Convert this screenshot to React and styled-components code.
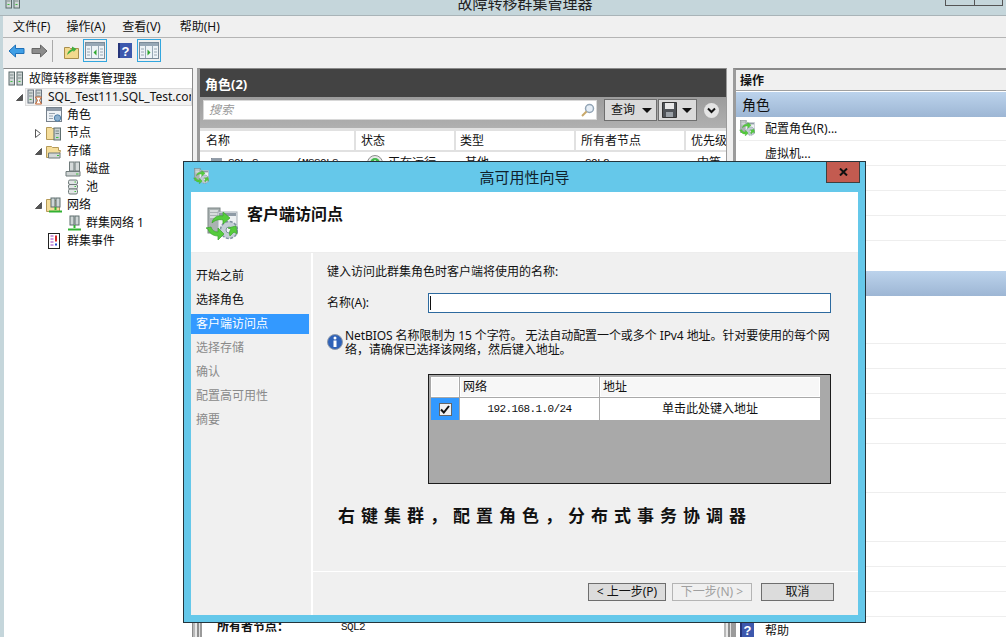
import React from "react";
import styled, { createGlobalStyle } from "styled-components";

const Global = createGlobalStyle`
  html, body { margin: 0; padding: 0; height: 100%; overflow: hidden; background: #f0f0f0; }
  #root { height: 100%; }
  * { box-sizing: border-box; }
`;

const sans = `"Noto Sans", "Noto Sans CJK SC", sans-serif`;
const mono = `"Liberation Mono", "Noto Sans CJK SC", monospace`;

const Page = styled.div`
  position: relative;
  width: 1006px;
  height: 637px;
  overflow: hidden;
  display: flex;
  flex-direction: column;
  font: 12px/16px ${sans};
  color: #111;
  background: #f0f0f0;
`;
const TitleBar = styled.div`
  height: 16px;
  flex: none;
  position: relative;
  background: #c5d6db;
  border-bottom: 1px solid #a9b4b8;
  overflow: hidden;
  display: flex;
  justify-content: center;
  padding-left: 44px;
`;
const AppTitle = styled.div`
  font-size: 15px;
  line-height: 20px;
  margin-top: -7px;
  color: #222;
`;
const AppIcon = styled.div`
  position: absolute;
  left: 5px;
  top: -6px;
`;
const WinButtons = styled.div`
  position: absolute;
  right: 3px;
  top: -1px;
  display: flex;
  height: 7px;
  border: 1px solid #555;
`;
const WinButton = styled.div`
  width: 28px;
  border-left: ${(p) => (p.$first ? "none" : "1px solid #555")};
`;
const Chrome = styled.div`
  flex: 1;
  min-height: 0;
  display: flex;
  flex-direction: column;
  border-left: 3px solid #c5d6db;
`;
const MenuBar = styled.div`
  height: 22px;
  flex: none;
  display: flex;
  gap: 16px;
  align-items: center;
  padding-left: 10px;
  border-bottom: 1px solid #b4b4b4;
`;
const MenuItem = styled.span`
  line-height: 16px;
  margin-right: ${(p) => p.$mr || 0}px;
`;
const Toolbar = styled.div`
  height: 30px;
  flex: none;
  display: flex;
  align-items: center;
  padding: 0 0 5px 5px;
`;
const ToolIcon = styled.div`
  display: flex;
  margin-left: ${(p) => p.$ml || 0}px;
`;
const ToolSep = styled.div`
  width: 1px;
  height: 22px;
  background: #aaa;
  margin: 0 11px 0 4px;
`;
const ToolToggle = styled.div`
  width: 24px;
  height: 23px;
  border: 1px solid #32a6de;
  margin-left: ${(p) => p.$ml || 0}px;
  display: flex;
  align-items: center;
  justify-content: center;
`;
const Panes = styled.div`
  flex: 1;
  min-height: 0;
  display: flex;
`;
const TreePane = styled.div`
  width: 190px;
  flex: none;
  background: #fff;
  border: 1px solid #8a8a8a;
  border-left-color: #c5d6db;
  border-bottom: none;
  padding-top: 1px;
`;
const TreeRow = styled.div`
  height: 18px;
  display: flex;
  align-items: center;
  padding-left: ${(p) => (p.$level === 0 ? 4 : p.$level * 19 - 8)}px;
`;
const ArrowSlot = styled.span`
  width: 12px;
  flex: none;
  display: flex;
  padding-left: 1px;
`;
const TreeLabel = styled.div`
  flex: 1;
  min-width: 0;
  height: 18px;
  display: flex;
  align-items: center;
  gap: 5px;
  margin-left: -2px;
  padding-left: 1px;
  overflow: hidden;
  white-space: nowrap;
  border: 1px solid ${(p) => (p.$selected ? "#dcdcdc" : "transparent")};
  background: ${(p) => (p.$selected ? "#f2f2f2" : "transparent")};
  svg { flex: none; }
`;
const CenterColumn = styled.div`
  width: 540px;
  flex: none;
  display: flex;
  flex-direction: column;
`;
const CenterPane = styled.div`
  flex: 1;
  min-height: 0;
  margin: 0 6px 0 4px;
  background: #fff;
  border-top: 1px solid #8a8a8a;
  border-left: 3px solid #9b9b9b;
  border-right: 1px solid #9b9b9b;
`;
const DarkHeader = styled.div`
  height: 28px;
  background: #434343;
  color: #fff;
  font-weight: 700;
  font-size: 13px;
  line-height: 30px;
  padding-left: 5px;
`;
const SearchBar = styled.div`
  height: 31px;
  display: flex;
  align-items: flex-start;
  padding: 2px 0 0 3px;
  background: linear-gradient(#9c9c9c, #b0b0b0);
`;
const SearchBox = styled.div`
  width: 394px;
  height: 20px;
  margin: 1px 7px 0 0;
  background: #fff;
  border: 1px solid #d8d8d8;
  display: flex;
  align-items: center;
  justify-content: space-between;
  padding: 0 1px 0 5px;
  color: #999;
  font-style: italic;
`;
const DropButton = styled.div`
  width: ${(p) => p.$w}px;
  height: 22px;
  background: #dadada;
  border: 1px solid #6e6e6e;
  margin-right: ${(p) => p.$mr || 0}px;
  display: flex;
  align-items: center;
  justify-content: space-between;
  padding: 0 4px 0 ${(p) => p.$pl || 6}px;
`;
const Caret = styled.span`
  width: 0;
  height: 0;
  border-left: 5px solid transparent;
  border-right: 5px solid transparent;
  border-top: 5px solid #111;
`;
const RoundButton = styled.div`
  width: 15px;
  height: 15px;
  margin-top: 4px;
  border-radius: 50%;
  background: #e4e4e4;
  display: flex;
  align-items: center;
  justify-content: center;
`;
const ListHead = styled.div`
  display: grid;
  grid-template-columns: 154px 98px 118px 108px 40px;
  column-gap: 2px;
  background: #e1e1e1;
  padding: 3px 0 2px;
`;
const HeadCell = styled.div`
  background: #fff;
  height: 19px;
  line-height: 19px;
  padding-left: ${(p) => p.$pl || 5}px;
  overflow: hidden;
  white-space: nowrap;
`;
const ListRow = styled.div`
  display: grid;
  grid-template-columns: 156px 100px 120px 110px 40px;
  height: 20px;
  align-items: center;
  margin-top: 1px;
`;
const RowCell = styled.div`
  display: flex;
  align-items: center;
  gap: ${(p) => p.$gap || 0}px;
  padding-left: ${(p) => p.$pl || 0}px;
  white-space: nowrap;
  overflow: hidden;
`;
const MonoText = styled.span`
  font: 11px/14px ${mono};
  letter-spacing: -0.6px;
  margin-left: ${(p) => p.$ml || 0}px;
`;
const DetailRow = styled.div`
  height: 20px;
  flex: none;
  display: flex;
  background: #fff;
  align-items: center;
`;
const Stripe = styled.div`
  width: 9px;
  height: 100%;
  flex: none;
  background: linear-gradient(90deg, #b8b8b8 0 2px, #e8e8e8 2px 4px, #8f8f8f 4px 6px, #e0e0e0 6px 7px, #9a9a9a 7px);
`;
const DetailLabel = styled.div`
  flex: 1;
  display: flex;
  padding-left: 15px;
  font-weight: 700;
  line-height: 20px;
`;
const DetailKey = styled.span`
  width: 124px;
`;
const DetailValue = styled.span`
  font: 400 11px/20px ${mono};
  letter-spacing: -0.6px;
`;
const ActionPane = styled.div`
  flex: 1;
  min-width: 0;
  background: #fff;
  border-top: 2px solid #8a8a8a;
  border-left: 3px solid #9b9b9b;
  position: relative;
`;
const ActionTitle = styled.div`
  height: 21px;
  background: #f0f0f0;
  border-bottom: 1px solid #a0a0a0;
  line-height: 22px;
  padding-left: 4px;
  font-weight: 700;
`;
const ActionSection = styled.div`
  height: 25px;
  margin-top: ${(p) => p.$mt || 0}px;
  background: linear-gradient(#bcd3ec, #9db6d4);
  line-height: 25px;
  padding-left: 6px;
  font-size: 14px;
`;
const ActionRow = styled.div`
  height: ${(p) => p.$h || 25}px;
  margin-left: 3px;
  border-bottom: ${(p) => (p.$plain ? "none" : "1px solid #eeeeee")};
  display: flex;
  align-items: center;
  position: relative;
  padding-left: 26px;
  padding-top: 1px;
`;
const ActionIcon = styled.span`
  position: absolute;
  left: ${(p) => p.$left || 0}px;
  top: ${(p) => p.$top || 3}px;
  display: flex;
`;
const Dialog = styled.div`
  position: absolute;
  left: 183px;
  top: 161px;
  width: 683px;
  height: 462px;
  border: 1px solid #24343c;
  background: #65c8ea;
  display: flex;
  flex-direction: column;
  padding: 0 7px 7px;
`;
const DialogBar = styled.div`
  height: 30px;
  flex: none;
  position: relative;
  display: flex;
  align-items: center;
  justify-content: center;
  font-size: 15px;
  color: #10222c;
`;
const DialogIcon = styled.span`
  position: absolute;
  left: 2px;
  top: 6px;
  display: flex;
`;
const CloseButton = styled.div`
  position: absolute;
  right: -2px;
  top: 0;
  width: 34px;
  height: 21px;
  background: #c35b50;
  border: 1px solid #3f3f3f;
  border-top: none;
  display: flex;
  align-items: center;
  justify-content: center;
`;
const DialogHead = styled.div`
  height: 61px;
  flex: none;
  background: #fff;
  border-bottom: 1px solid #ededed;
  display: flex;
  align-items: flex-start;
  gap: 9px;
  padding: 15px 0 0 14px;
`;
const DialogHeading = styled.div`
  font-size: 16px;
  font-weight: 700;
  line-height: 18px;
  margin-top: -2px;
`;
const DialogBody = styled.div`
  flex: 1;
  min-height: 0;
  display: flex;
  gap: 2px;
  background: #fff;
`;
const Nav = styled.div`
  width: 120px;
  flex: none;
  background: #f0f0f0;
  padding-top: 11px;
`;
const NavItem = styled.div`
  height: ${(p) => (p.$active ? 20 : 24)}px;
  margin: ${(p) => (p.$active ? "2px 2px 2px 0" : "0")};
  padding-left: 5px;
  display: flex;
  align-items: center;
  color: ${(p) => (p.$active ? "#fff" : p.$disabled ? "#8a8a8a" : "#111")};
  background: ${(p) => (p.$active ? "#3399ff" : "transparent")};
`;
const DialogMain = styled.div`
  flex: 1;
  min-width: 0;
  background: #f0f0f0;
  display: flex;
  flex-direction: column;
`;
const MainContent = styled.div`
  height: 318px;
  flex: none;
  padding: 11px 0 0 14px;
`;
const NameRow = styled.div`
  display: flex;
  align-items: center;
  margin-top: 13px;
`;
const NameLabel = styled.div`
  width: 101px;
  flex: none;
`;
const NameInput = styled.div`
  width: 403px;
  height: 20px;
  background: #fff;
  border: 1px solid #2d6a9f;
  padding: 2px 0 0 1px;
`;
const TextCursor = styled.div`
  width: 1px;
  height: 14px;
  background: #111;
`;
const InfoRow = styled.div`
  display: flex;
  gap: 2px;
  margin-top: 16px;
`;
const InfoIconWrap = styled.span`
  margin-top: 5px;
  display: flex;
`;
const InfoText = styled.div`
  line-height: 14px;
  white-space: nowrap;
  letter-spacing: -0.08px;
`;
const NetTable = styled.div`
  width: 403px;
  height: 110px;
  margin: 17px 0 0 101px;
  background: #a9a9a9;
  border: 1px solid #1c1c1c;
  padding: 2px 0 0 2px;
`;
const NetGrid = styled.div`
  display: grid;
  grid-template-columns: 28px 139px 220px;
  grid-template-rows: 20px 22px;
  gap: 1px;
`;
const NetHead = styled.div`
  background: #f7f7f7;
  border: 1px solid #fff;
  padding-left: 2px;
  line-height: 18px;
`;
const CheckCell = styled.div`
  background: #3399ff;
  display: flex;
  align-items: center;
  justify-content: center;
`;
const CheckBox = styled.div`
  width: 13px;
  height: 13px;
  background: #f2f2f2;
  border: 1px solid #666;
  display: flex;
  align-items: center;
  justify-content: center;
`;
const NetCell = styled.div`
  background: #fff;
  display: flex;
  align-items: center;
  justify-content: center;
`;
const Annotation = styled.div`
  margin: 20px 0 0 11px;
  font-size: 17px;
  font-weight: 700;
  line-height: 24px;
  letter-spacing: 6px;
  white-space: nowrap;
  color: #111;
`;
const Footer = styled.div`
  flex: 1;
  border-top: 1px solid #fff;
  display: flex;
  justify-content: flex-end;
  align-items: flex-start;
  gap: 6px;
  padding: 11px 24px 0 0;
`;
const WizardButton = styled.div`
  width: ${(p) => p.$w}px;
  height: 18px;
  margin-left: ${(p) => p.$ml || 0}px;
  background: ${(p) => (p.$off ? "#f0f0f0" : "#dcdcdc")};
  border: 1px solid ${(p) => (p.$off ? "#b4b4b4" : "#6e6e6e")};
  color: ${(p) => (p.$off ? "#a0a0a0" : "#111")};
  display: flex;
  align-items: center;
  justify-content: center;
  line-height: 16px;
  white-space: nowrap;
`;

const Arrow = ({ fill, dir, stroke }) => (
  <svg width="17" height="14" viewBox="0 0 17 14">
    <path
      d={dir === "l" ? "M1 7 7.5 1v3.5H16v5H7.5V13Z" : "M16 7 9.5 1v3.5H1v5h8.5V13Z"}
      fill={fill}
      stroke={stroke}
      strokeWidth="1"
    />
  </svg>
);
const FolderUp = () => (
  <svg width="15" height="16" viewBox="0 0 15 16">
    <path d="M.5 4.5h5l1 1h8v10H.5Z" fill="#f3d98d" stroke="#a98e4c" />
    <path d="M3 12C4 8 6 7 8 6V3.5L12.5 6 9.500 9V7.500C7 8 6 10 3 12Z" fill="#3fae3f" />
  </svg>
);
const PanelGlyph = ({ right }) => (
  <svg width="20" height="17" viewBox="0 0 20 17">
    <rect x=".5" y=".5" width="19" height="16" fill="#eef3f7" stroke="#7b8b99" />
    <rect x="1" y="1" width="18" height="3" fill="#98a8b6" />
    <path d="M6.500 4v12M13.500 4v12" stroke="#98a8b6" />
    <path d="M2 7h3M2 10h3M2 13h3M15 7h3M15 10h3M15 13h3" stroke="#9aa8b4" />
    <path d={right ? "M8.500 7.500v6l3-3Z" : "M11.500 7.500v6l-3-3Z"} fill="#2fa82f" />
  </svg>
);
const HelpIcon = ({ size = 14 }) => (
  <svg width={size} height={size + 1} viewBox="0 0 14 15">
    <rect width="14" height="15" fill="#3d58ad" />
    <rect width="2" height="15" fill="#26357a" />
    <text x="7.500" y="12.500" fontSize="13" fontWeight="700" fill="#fff" textAnchor="middle" fontFamily="Liberation Sans">?</text>
  </svg>
);
const Servers = ({ stroke = "#6f7f6f" }) => (
  <>
    <rect x="1" y="1" width="5.500" height="13" fill="#cfd6d6" stroke={stroke} />
    <rect x="9" y="1" width="5.500" height="13" fill="#cfd6d6" stroke={stroke} />
    <path d="M2 4h3.500M2 7h3.500M10 4h3.500M10 7h3.500" stroke="#7d8a8a" />
    <path d="M2.500 10.500h2M10.500 10.500h2" stroke="#3fbf3f" />
  </>
);
const ClusterRoot = () => (
  <svg width="16" height="16" viewBox="0 0 16 16">
    <Servers stroke="#5a6a6a" />
  </svg>
);
const ClusterTest = () => (
  <svg width="16" height="16" viewBox="0 0 16 16">
    <Servers stroke="#6a7480" />
    <path d="M8.500 8h6l-2 3.500 2 3.500h-6l2-3.500Z" fill="#fff" stroke="#c2622c" />
  </svg>
);
const RolesIcon = () => (
  <svg width="16" height="16" viewBox="0 0 16 16">
    <rect x=".5" y=".5" width="15" height="14" fill="#eef2f6" stroke="#76818c" />
    <rect x="1" y="1" width="14" height="3" fill="#8f9ba8" />
    <path d="M3 6.500h6M3 9h4M3 11.500h4" stroke="#98a4b0" />
    <circle cx="11.500" cy="11" r="3.200" fill="#8bb0d0" stroke="#4f7fa8" />
  </svg>
);
const FolderBase = ({ open }) => (
  <path d={open ? "M.5 3.500h5l1 1h6v3h2l-2 7H.5Z" : "M.5 2.500h5l1 1h7v11H.5Z"} fill="#f5dd9a" stroke="#b59a58" />
);
const NodesIcon = () => (
  <svg width="16" height="16" viewBox="0 0 16 16">
    <FolderBase />
    <rect x="8" y="3" width="6.500" height="12" fill="#c9d1d1" stroke="#5f6f6f" />
    <path d="M9.500 6h3.500M9.500 8.500h3.500" stroke="#7a8888" />
    <path d="M10 12.500h2.500" stroke="#3fbf3f" />
  </svg>
);
const StorageIcon = () => (
  <svg width="16" height="16" viewBox="0 0 16 16">
    <FolderBase open />
    <path d="M2.500 10h11.500v5H2.500Z" fill="#d3d8d8" stroke="#6f7a7a" />
    <path d="M11 12.500h2" stroke="#3fbf3f" />
  </svg>
);
const DiskIcon = () => (
  <svg width="16" height="16" viewBox="0 0 16 16">
    <rect x="4.500" y="1" width="4.500" height="9" fill="#d5dada" stroke="#6f7a7a" />
    <rect x="10" y="1" width="4.500" height="9" fill="#d5dada" stroke="#6f7a7a" />
    <path d="M1 10.500h14V15H1Z" fill="#cfd4d4" stroke="#6f7a7a" />
    <path d="M11 13h2.500" stroke="#3fbf3f" />
  </svg>
);
const PoolIcon = () => (
  <svg width="16" height="16" viewBox="0 0 16 16">
    <rect x="3.500" y="1" width="9" height="4.500" rx="1.500" fill="#e1e5e5" stroke="#6f7a7a" />
    <rect x="3.500" y="5.500" width="9" height="4.500" rx="1.500" fill="#e1e5e5" stroke="#6f7a7a" />
    <rect x="3.500" y="10" width="9" height="5" rx="1.500" fill="#e1e5e5" stroke="#6f7a7a" />
    <path d="M9.500 3h1.500M9.500 7.500h1.500M9.500 12.500h1.500" stroke="#3fbf3f" />
  </svg>
);
const NetIcon = ({ folder }) => (
  <svg width="16" height="16" viewBox="0 0 16 16">
    {folder && <FolderBase />}
    <rect x="5" y="1" width="4" height="9" fill="#cfd6d6" stroke="#5f6f6f" />
    <rect x="10" y="1" width="4" height="9" fill="#cfd6d6" stroke="#5f6f6f" />
    <path d="M9.500 10v3M3 14.500h13" stroke="#32b232" strokeWidth="2" />
  </svg>
);
const EventIcon = () => (
  <svg width="16" height="16" viewBox="0 0 16 16">
    <rect x="2.500" y=".5" width="11" height="15" fill="#fff" stroke="#222" />
    <path d="M4.500 3h3M4.500 6h3M4.500 9h3M4.500 12h3" stroke="#9a3ac0" />
    <path d="M10 2.500v6" stroke="#d62b2b" strokeWidth="2" />
    <path d="M10 10.500v2" stroke="#2b4fd6" strokeWidth="2" />
  </svg>
);
const Wizard = ({ s = 16 }) => (
  <svg width={s} height={s} viewBox="0 0 33 33">
    <rect x="3" y="1" width="12" height="25" fill="#aab2b2" stroke="#7c8686" />
    <path d="M5 4h8M5 7h8M5 10h8" stroke="#e6eaea" strokeWidth="1.500" />
    <rect x="13" y="5" width="19" height="22" fill="#eef1f3" stroke="#a4adb5" />
    <rect x="14" y="6" width="17" height="3" fill="#8f9ba6" />
    <circle cx="24" cy="23" r="8.500" fill="#c4ced6" stroke="#7f919f" strokeDasharray="3 1.500" strokeWidth="1.500" />
    <circle cx="24" cy="23" r="3" fill="#eef1f3" stroke="#7f919f" />
    <path d="M7 16C8 10 13 8 18 9V5l7 6-7 6v-4c-4-1-8 0-11 3Z" fill="#55cc3c" stroke="#3aa52a" strokeWidth=".7" />
    <path d="M1 21l5-1c1 3 3 5 7 5v-4l6 6-6 6v-4c-5 0-9-3-10-7Z" fill="#55cc3c" stroke="#3aa52a" strokeWidth=".7" />
    <path d="M25 29c-1-2-1-4 1-7l-3-1 8-2 1 8-3-2c-2 2-3 3-4 4Z" fill="#55cc3c" stroke="#3aa52a" strokeWidth=".7" />
  </svg>
);
const RoleRowIcon = () => (
  <svg width="15" height="15" viewBox="0 0 15 15">
    <rect x=".5" y=".5" width="14" height="13" fill="#eef2f6" stroke="#76818c" />
    <rect x="1" y="1" width="13" height="3" fill="#8f9ba8" />
    <path d="M3 7h6M3 10h4" stroke="#98a4b0" />
  </svg>
);
const StatusIcon = () => (
  <svg width="16" height="16" viewBox="0 0 16 16">
    <circle cx="8" cy="8" r="7.500" fill="#e8e8e8" stroke="#8d8d8d" />
    <circle cx="8" cy="8" r="5" fill="#3fb84a" />
    <path d="M8 4.500 11 8.500H5Z" fill="#d8f5d8" />
  </svg>
);
const Magnifier = () => (
  <svg width="14" height="14" viewBox="0 0 14 14">
    <circle cx="8.500" cy="5.500" r="4" fill="#e6eef6" stroke="#93a5b6" strokeWidth="1.500" />
    <path d="M5.500 8.500 1 13" stroke="#c8a86a" strokeWidth="2" />
  </svg>
);
const Floppy = () => (
  <svg width="15" height="16" viewBox="0 0 15 16">
    <path d="M.5.500h14v15H.5Z" fill="#4f5358" stroke="#333" />
    <rect x="3" y="1" width="9" height="6" fill="#e8e8e8" />
    <rect x="4" y="10" width="7" height="5" fill="#9aa0a6" />
  </svg>
);
const Chevron = () => (
  <svg width="9" height="7" viewBox="0 0 9 7">
    <path d="M1 1.500 4.500 5 8 1.500" fill="none" stroke="#111" strokeWidth="2" />
  </svg>
);
const Expanded = () => (
  <svg width="7" height="7" viewBox="0 0 7 7">
    <path d="M6.500 .5v6H.5Z" fill="#555" stroke="#555" />
  </svg>
);
const Collapsed = () => (
  <svg width="6" height="9" viewBox="0 0 6 9">
    <path d="M.5 .5 5.500 4.500.5 8.500Z" fill="#fff" stroke="#555" />
  </svg>
);
const InfoCircle = () => (
  <svg width="16" height="16" viewBox="0 0 16 16">
    <circle cx="8" cy="8" r="7.500" fill="#2f62b8" stroke="#8f9aaa" />
    <circle cx="8" cy="4" r="1.500" fill="#fff" />
    <rect x="6.500" y="6.500" width="3" height="6.500" fill="#fff" />
  </svg>
);
const CheckMark = () => (
  <svg width="10" height="9" viewBox="0 0 10 9">
    <path d="M1 4.500 3.800 7.500 9 1" fill="none" stroke="#111" strokeWidth="2" />
  </svg>
);
const CloseX = () => (
  <svg width="9" height="8" viewBox="0 0 9 8">
    <path d="M1 .5 8 7.500M8 .5 1 7.500" stroke="#111" strokeWidth="2" />
  </svg>
);

const treeItems = [
  { level: 0, icon: <ClusterRoot />, text: "故障转移群集管理器" },
  { level: 1, icon: <ClusterTest />, text: "SQL_Test111.SQL_Test.com", arrow: "open", selected: true },
  { level: 2, icon: <RolesIcon />, text: "角色", arrow: "none" },
  { level: 2, icon: <NodesIcon />, text: "节点", arrow: "closed" },
  { level: 2, icon: <StorageIcon />, text: "存储", arrow: "open" },
  { level: 3, icon: <DiskIcon />, text: "磁盘", arrow: "none" },
  { level: 3, icon: <PoolIcon />, text: "池", arrow: "none" },
  { level: 2, icon: <NetIcon folder />, text: "网络", arrow: "open" },
  { level: 3, icon: <NetIcon />, text: "群集网络 1", arrow: "none" },
  { level: 2, icon: <EventIcon />, text: "群集事件", arrow: "none" },
];
const navItems = [
  { t: "开始之前" },
  { t: "选择角色" },
  { t: "客户端访问点", active: true },
  { t: "选择存储", disabled: true },
  { t: "确认", disabled: true },
  { t: "配置高可用性", disabled: true },
  { t: "摘要", disabled: true },
];
const secondRows = [48, 25, 25, 25, 25, 49, 49, 25, 25, 25];

export default function App() {
  return (
    <Page>
      <Global />
      <TitleBar>
        <AppIcon><ClusterRoot /></AppIcon>
        <AppTitle>故障转移群集管理器</AppTitle>
        <WinButtons>
          <WinButton $first />
          <WinButton />
        </WinButtons>
      </TitleBar>
      <Chrome>
        <MenuBar>
          <MenuItem>文件(F)</MenuItem>
          <MenuItem $mr={1}>操作(A)</MenuItem>
          <MenuItem $mr={3}>查看(V)</MenuItem>
          <MenuItem>帮助(H)</MenuItem>
        </MenuBar>
        <Toolbar>
          <ToolIcon><Arrow dir="l" fill="#3f9fe6" stroke="#1f70b8" /></ToolIcon>
          <ToolIcon $ml={6}><Arrow dir="r" fill="#8c8c8c" stroke="#666" /></ToolIcon>
          <ToolSep />
          <ToolIcon><FolderUp /></ToolIcon>
          <ToolToggle $ml={4}><PanelGlyph /></ToolToggle>
          <ToolIcon $ml={11}><HelpIcon /></ToolIcon>
          <ToolToggle $ml={5}><PanelGlyph right /></ToolToggle>
        </Toolbar>
        <Panes>
          <TreePane>
            {treeItems.map((it) => (
              <TreeRow key={it.text} $level={it.level}>
                {it.arrow && (
                  <ArrowSlot>
                    {it.arrow === "open" && <Expanded />}
                    {it.arrow === "closed" && <Collapsed />}
                  </ArrowSlot>
                )}
                <TreeLabel $selected={it.selected}>
                  {it.icon}
                  <span>{it.text}</span>
                </TreeLabel>
              </TreeRow>
            ))}
          </TreePane>
          <CenterColumn>
            <CenterPane>
              <DarkHeader>角色(2)</DarkHeader>
              <SearchBar>
                <SearchBox>
                  <span>搜索</span>
                  <Magnifier />
                </SearchBox>
                <DropButton $w={53} $mr={1}>
                  <span>查询</span>
                  <Caret />
                </DropButton>
                <DropButton $w={39} $mr={7} $pl={3}>
                  <Floppy />
                  <Caret />
                </DropButton>
                <RoundButton><Chevron /></RoundButton>
              </SearchBar>
              <ListHead>
                <HeadCell $pl={6}>名称</HeadCell>
                <HeadCell>状态</HeadCell>
                <HeadCell $pl={4}>类型</HeadCell>
                <HeadCell>所有者节点</HeadCell>
                <HeadCell>优先级</HeadCell>
              </ListHead>
              <ListRow>
                <RowCell $pl={11} $gap={6}>
                  <RoleRowIcon />
                  <MonoText>SQL_S</MonoText>
                  <MonoText $ml={32}>(MSSQLS...</MonoText>
                </RowCell>
                <RowCell $pl={11} $gap={5}>
                  <StatusIcon />
                  <span>正在运行</span>
                </RowCell>
                <RowCell $pl={9}>其他</RowCell>
                <RowCell $pl={9}><MonoText>SQL2</MonoText></RowCell>
                <RowCell $pl={11}>中等</RowCell>
              </ListRow>
            </CenterPane>
            <DetailRow>
              <Stripe />
              <DetailLabel>
                <DetailKey>所有者节点：</DetailKey>
                <DetailValue>SQL2</DetailValue>
              </DetailLabel>
              <Stripe />
            </DetailRow>
          </CenterColumn>
          <ActionPane>
            <ActionTitle>操作</ActionTitle>
            <ActionSection $mt={1}>角色</ActionSection>
            <ActionRow $h={24}>
              <ActionIcon><Wizard /></ActionIcon>
              配置角色(R)...
            </ActionRow>
            <ActionRow>虚拟机...</ActionRow>
            <ActionRow />
            <ActionRow />
            <ActionRow />
            <ActionSection $mt={30} />
            {secondRows.map((h, i) => (
              <ActionRow key={i} $h={h} />
            ))}
            <ActionRow $h={26} $plain>
              <ActionIcon $left={1} $top={5}><HelpIcon /></ActionIcon>
              帮助
            </ActionRow>
          </ActionPane>
        </Panes>
      </Chrome>

      <Dialog>
        <DialogBar>
          <DialogIcon><Wizard /></DialogIcon>
          高可用性向导
          <CloseButton><CloseX /></CloseButton>
        </DialogBar>
        <DialogHead>
          <Wizard s={33} />
          <DialogHeading>客户端访问点</DialogHeading>
        </DialogHead>
        <DialogBody>
          <Nav>
            {navItems.map((n) => (
              <NavItem key={n.t} $active={n.active} $disabled={n.disabled}>{n.t}</NavItem>
            ))}
          </Nav>
          <DialogMain>
            <MainContent>
              <div>键入访问此群集角色时客户端将使用的名称:</div>
              <NameRow>
                <NameLabel>名称(A):</NameLabel>
                <NameInput><TextCursor /></NameInput>
              </NameRow>
              <InfoRow>
                <InfoIconWrap><InfoCircle /></InfoIconWrap>
                <InfoText>
                  NetBIOS 名称限制为 15 个字符。 无法自动配置一个或多个 IPv4 地址。针对要使用的每个网
                  <br />
                  络，请确保已选择该网络，然后键入地址。
                </InfoText>
              </InfoRow>
              <NetTable>
                <NetGrid>
                  <NetHead />
                  <NetHead>网络</NetHead>
                  <NetHead>地址</NetHead>
                  <CheckCell><CheckBox><CheckMark /></CheckBox></CheckCell>
                  <NetCell><MonoText>192.168.1.0/24</MonoText></NetCell>
                  <NetCell>单击此处键入地址</NetCell>
                </NetGrid>
              </NetTable>
              <Annotation>右键集群，配置角色，分布式事务协调器</Annotation>
            </MainContent>
            <Footer>
              <WizardButton $w={78}>&lt; 上一步(P)</WizardButton>
              <WizardButton $w={80} $off>下一步(N) &gt;</WizardButton>
              <WizardButton $w={73} $ml={3}>取消</WizardButton>
            </Footer>
          </DialogMain>
        </DialogBody>
      </Dialog>
    </Page>
  );
}
